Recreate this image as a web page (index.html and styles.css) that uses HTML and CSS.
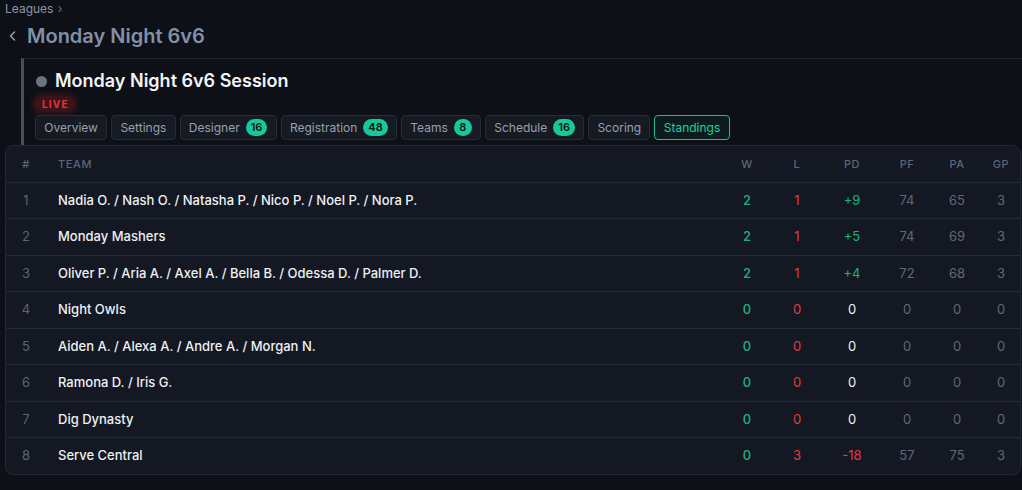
FILE: index.html
```html
<!DOCTYPE html>
<html>
<head>
<meta charset="utf-8">
<link rel="stylesheet" href="styles.css">
</head>
<body>
<div class="page">
  <nav class="crumbs">Leagues <span class="sep">›</span></nav>
  <div class="title-row">
    <svg class="back" width="10" height="12" viewBox="0 0 10 12"><path d="M6.5 2 L2.5 6 L6.5 10" fill="none" stroke="#9aa3b2" stroke-width="1.5" stroke-linecap="round" stroke-linejoin="round"/></svg>
    <h1>Monday Night 6v6</h1>
  </div>
  <section class="session">
    <div class="session-head"><span class="dot"></span><h2>Monday Night 6v6 Session</h2></div>
    <span class="live">LIVE</span>
    <div class="tabs">
      <span class="tab">Overview</span>
      <span class="tab">Settings</span>
      <span class="tab">Designer <b class="count">16</b></span>
      <span class="tab">Registration <b class="count">48</b></span>
      <span class="tab">Teams <b class="count">8</b></span>
      <span class="tab">Schedule <b class="count">16</b></span>
      <span class="tab">Scoring</span>
      <span class="tab active">Standings</span>
    </div>
  </section>
  <div class="table-card">
    <table class="standings">
      <colgroup>
        <col class="c-rank"><col class="c-team"><col class="c-w"><col class="c-l"><col class="c-pd"><col class="c-pf"><col class="c-pa"><col class="c-gp">
      </colgroup>
      <thead>
        <tr><th>#</th><th class="team">Team</th><th>W</th><th>L</th><th>PD</th><th>PF</th><th>PA</th><th>GP</th></tr>
      </thead>
      <tbody>
        <tr><td class="rank">1</td><td class="team">Nadia O. / Nash O. / Natasha P. / Nico P. / Noel P. / Nora P.</td><td class="win">2</td><td class="loss">1</td><td class="pos">+9</td><td class="dim">74</td><td class="dim">65</td><td class="dim">3</td></tr>
        <tr><td class="rank">2</td><td class="team">Monday Mashers</td><td class="win">2</td><td class="loss">1</td><td class="pos">+5</td><td class="dim">74</td><td class="dim">69</td><td class="dim">3</td></tr>
        <tr><td class="rank">3</td><td class="team">Oliver P. / Aria A. / Axel A. / Bella B. / Odessa D. / Palmer D.</td><td class="win">2</td><td class="loss">1</td><td class="pos">+4</td><td class="dim">72</td><td class="dim">68</td><td class="dim">3</td></tr>
        <tr><td class="rank">4</td><td class="team">Night Owls</td><td class="win">0</td><td class="loss">0</td><td class="zero">0</td><td class="dim">0</td><td class="dim">0</td><td class="dim">0</td></tr>
        <tr><td class="rank">5</td><td class="team">Aiden A. / Alexa A. / Andre A. / Morgan N.</td><td class="win">0</td><td class="loss">0</td><td class="zero">0</td><td class="dim">0</td><td class="dim">0</td><td class="dim">0</td></tr>
        <tr><td class="rank">6</td><td class="team">Ramona D. / Iris G.</td><td class="win">0</td><td class="loss">0</td><td class="zero">0</td><td class="dim">0</td><td class="dim">0</td><td class="dim">0</td></tr>
        <tr><td class="rank">7</td><td class="team">Dig Dynasty</td><td class="win">0</td><td class="loss">0</td><td class="zero">0</td><td class="dim">0</td><td class="dim">0</td><td class="dim">0</td></tr>
        <tr><td class="rank">8</td><td class="team">Serve Central</td><td class="win">0</td><td class="loss">3</td><td class="neg">-18</td><td class="dim">57</td><td class="dim">75</td><td class="dim">3</td></tr>
      </tbody>
    </table>
  </div>
</div>
</body>
</html>
```

FILE: styles.css
```css
* { box-sizing: border-box; }
html, body {
  margin: 0;
  background: #0d1017;
  font-family: Inter, "Noto Sans", "Liberation Sans", sans-serif;
  color: #e6e9ef;
}
.page {
  width: 1022px;
  height: 490px;
  overflow: hidden;
}
.crumbs {
  padding-left: 5px;
  font-size: 12px;
  line-height: 18px;
  color: #8d95a3;
}
.crumbs .sep { color: #6b7383; margin-left: 1px; }
.title-row {
  display: flex;
  align-items: center;
  gap: 9px;
  padding-left: 8px;
  height: 36px;
}
.title-row h1 {
  margin: 0;
  font-size: 20px;
  font-weight: 600;
  line-height: 24px;
  color: #8290a7;
}
.session {
  margin-left: 21px;
  margin-top: 4px;
  border-left: 3px solid #4a4f5b;
  border-top: 1px solid #1f2430;
  padding: 11px 0 5px 11px;
}
.session-head {
  display: flex;
  align-items: center;
  gap: 8px;
  height: 22px;
}
.dot {
  width: 11px;
  height: 11px;
  border-radius: 50%;
  background: #6b7280;
  margin-left: 1px;
}
.session-head h2 {
  margin: 0;
  font-size: 18px;
  font-weight: 600;
  line-height: 22px;
  color: #f3f4f6;
}
.live {
  display: inline-block;
  margin-top: 5px;
  padding: 0 6px 0 7px;
  height: 14px;
  line-height: 14px;
  font-size: 10px;
  font-weight: 700;
  letter-spacing: 1.2px;
  color: #e0363d;
  background: #3a1418;
  border-radius: 7px;
  box-shadow: 0 0 6px 2px rgba(150, 25, 32, 0.45);
}
.tabs {
  display: flex;
  gap: 4px;
  margin-top: 3px;
}
.tab {
  display: flex;
  align-items: center;
  gap: 6px;
  height: 25px;
  padding: 0 8.25px;
  font-size: 12px;
  color: #98a1b0;
  background: #151a23;
  border: 1px solid #262c38;
  border-radius: 4px;
}
.count {
  display: inline-block;
  min-width: 18px;
  height: 17px;
  padding: 0 5px;
  border-radius: 9px;
  background: #16c99a;
  color: #07130f;
  font-size: 11px;
  font-weight: 600;
  line-height: 17px;
  text-align: center;
}
.tab.active {
  color: #1fd1a2;
  border-color: #1bbf92;
  background: #0c1b1b;
}
.table-card {
  margin: 0 1px 0 5px;
  background: #141822;
  border: 1px solid #222836;
  border-radius: 8px;
  overflow: hidden;
}
.standings {
  width: 100%;
  border-collapse: collapse;
  table-layout: fixed;
}
.c-rank { width: 40px; }
.c-w { width: 50px; }
.c-l { width: 50px; }
.c-pd { width: 60px; }
.c-pf { width: 50px; }
.c-pa { width: 50px; }
.c-gp { width: 38px; }
.standings th {
  font-size: 11px;
  font-weight: 500;
  letter-spacing: 0.6px;
  text-transform: uppercase;
  color: #5b667a;
  line-height: 16.5px;
  padding: 10px 0 9px;
  text-align: center;
  border-bottom: 1px solid #232937;
}
.standings td {
  font-size: 13px;
  line-height: 19.5px;
  padding: 8px 0;
  text-align: center;
  border-bottom: 1px solid #232937;
  color: #e8eaef;
}
.standings tbody tr:last-child td { border-bottom: none; }
.standings .team {
  text-align: left;
  padding-left: 12px;
  white-space: nowrap;
}
.standings td.team { font-weight: 500; color: #eef0f4; }
.standings td.rank { color: #5a6578; }
.standings td.win { color: #18b47f; font-weight: 500; }
.standings td.loss { color: #e23b3f; }
.standings td.pos { color: #19b381; }
.standings td.neg { color: #e23b3f; }
.standings td.zero { color: #f1f2f5; }
.standings td.dim { color: #5f6878; }
```
